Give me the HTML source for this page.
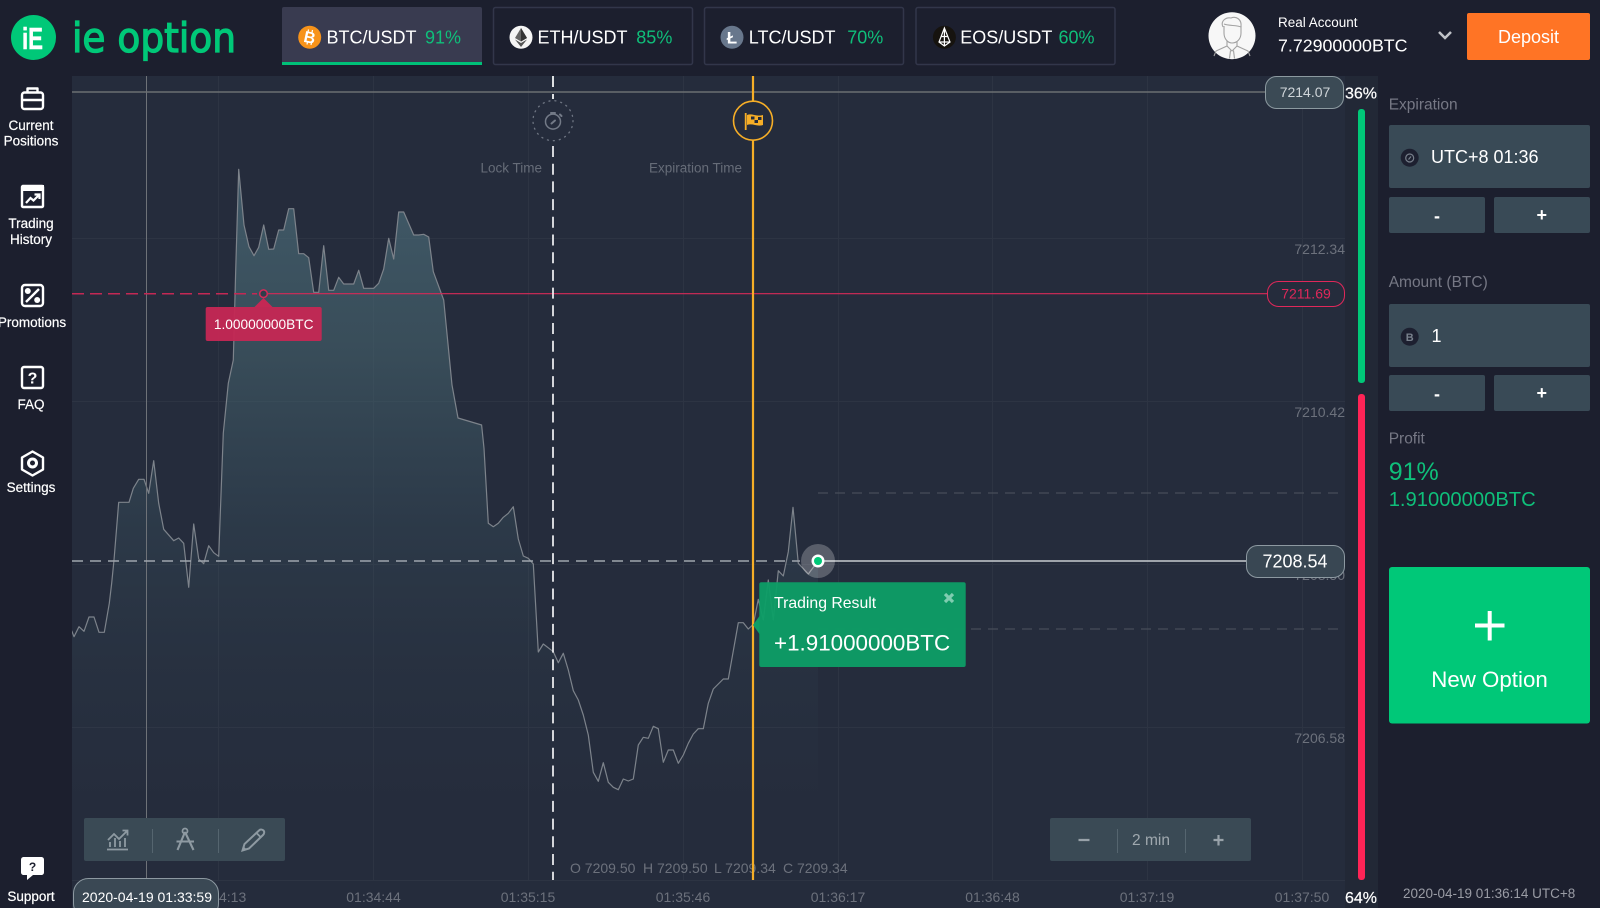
<!DOCTYPE html>
<html lang="en"><head><meta charset="utf-8"><title>ie option</title>
<style>
html,body{margin:0;padding:0;background:#1c1f2e;width:1600px;height:908px;overflow:hidden}
svg{display:block}
text{font-family:"Liberation Sans",sans-serif}
.w{fill:#fff}
.ax{fill:#6c717c;font-size:14px}
.g{fill:#0fbf7a;font-size:18px}
.lab{fill:#fff;font-size:13.5px;text-anchor:middle;stroke:#fff;stroke-width:.2}
.pl{fill:#767885;font-size:15.5px}
.tab{fill:#fff;font-size:18px}
</style></head><body>
<svg width="1600" height="908" viewBox="0 0 1600 908" xmlns="http://www.w3.org/2000/svg">
<defs>
<linearGradient id="af" gradientUnits="userSpaceOnUse" x1="0" y1="170" x2="0" y2="880">
<stop offset="0" stop-color="#4c6d7b" stop-opacity=".7"/>
<stop offset=".25" stop-color="#47656f" stop-opacity=".58"/>
<stop offset=".5" stop-color="#41606c" stop-opacity=".26"/>
<stop offset=".72" stop-color="#3a5560" stop-opacity=".1"/>
<stop offset=".9" stop-color="#3a5560" stop-opacity="0"/>
</linearGradient>
</defs>
<rect width="1600" height="908" fill="#1c1f2e"/>
<!-- chart bg -->
<rect x="72" y="76" width="1273" height="832" fill="#252c3c"/>
<rect x="1345" y="76" width="33" height="832" fill="#222836"/>
<!-- grid -->
<g stroke="#2d3443" stroke-width="1">
<path d="M218.5 76V880M373.5 76V880M528.5 76V880M683.5 76V880M838.5 76V880M992.5 76V880M1147.5 76V880M1302.5 76V880"/>
<path d="M72 238.5H1345M72 401.5H1345M72 564.5H1345M72 727.5H1345M72 880.5H1345"/>
</g>
<!-- area and line -->
<path fill="url(#af)" d="M71.7 880L71.7 630.7 74 636.7 79 626.7 84 631.3 89 617 94 617 99 632.3 104.3 632.3 109.3 603.3 111.7 583 114 560 118.7 502.3 129 502.3 133.3 488.3 138.7 479.3 144 479.3 148.7 493.3 153.7 460.7 158.7 503.3 163.7 529.3 173.7 540.7 178.7 538 183.7 543.3 188.7 587.3 193.7 524 198.7 559 203.7 563.7 208.7 545.7 213.7 552.7 218.7 556.3 223.3 433 228.3 383.3 233.3 360 235.7 270 238.7 169.3 244 225 249 246.7 254 255.7 258.7 247.3 263.7 225 268.7 249.3 273.7 249 278.7 230 283.7 230 288.7 208.7 293.7 208.7 298.7 253.7 303.7 253.7 308.7 257.7 313.7 292.3 318.7 292.3 323.7 245.7 328.7 290.3 333.7 290.3 338.7 277.3 343.7 284 353.7 284 358.7 270.3 363.7 288.3 373.7 288.3 378.7 283.3 383.7 269 388.7 238.3 393.7 259 398.7 212 403.7 212 413.7 235 418.7 235 423.7 234.3 428.7 237 433.3 271.7 443.7 300 452 385 458 418 481.6 425 484 448.3 488.3 523.3 493.3 526.7 498.3 523.3 503.3 517.3 508.3 513.3 513.3 506.7 518.3 539 523.3 556 528.3 558.3 533.3 564 538.3 652 543.3 644 553.3 651.7 558.3 662.7 563.3 653.3 568.3 670 573.3 690.7 578.3 700 583.3 715 588.3 735 593.3 772.3 598.3 781.3 603.3 762.7 608.3 782.3 613.3 787.3 618.3 789.7 623.3 779 628.3 781 633.3 779 638.3 745 643.3 737.3 648.3 738.3 653.3 726.3 658.3 728.7 663.3 762.3 668.3 750 673.3 750 678.3 763.3 683.3 755 688.3 743.3 693.3 734 698.3 728.7 703.3 728.7 708.3 703.3 713.3 689 723.3 679 728.3 679 738.3 622.7 743.3 622.7 748.3 629 753.3 624.3 758.3 599.3 763.3 620 768.3 580 773.3 620 778.3 570.7 783.3 576 788.3 551.7 793 507.3 798.3 563.3 808.3 574 818 561 818 880Z"/>
<polyline fill="none" stroke="#7d838b" stroke-width="1.2" stroke-linejoin="round" points="71.7,630.7 74,636.7 79,626.7 84,631.3 89,617 94,617 99,632.3 104.3,632.3 109.3,603.3 111.7,583 114,560 118.7,502.3 129,502.3 133.3,488.3 138.7,479.3 144,479.3 148.7,493.3 153.7,460.7 158.7,503.3 163.7,529.3 173.7,540.7 178.7,538 183.7,543.3 188.7,587.3 193.7,524 198.7,559 203.7,563.7 208.7,545.7 213.7,552.7 218.7,556.3 223.3,433 228.3,383.3 233.3,360 235.7,270 238.7,169.3 244,225 249,246.7 254,255.7 258.7,247.3 263.7,225 268.7,249.3 273.7,249 278.7,230 283.7,230 288.7,208.7 293.7,208.7 298.7,253.7 303.7,253.7 308.7,257.7 313.7,292.3 318.7,292.3 323.7,245.7 328.7,290.3 333.7,290.3 338.7,277.3 343.7,284 353.7,284 358.7,270.3 363.7,288.3 373.7,288.3 378.7,283.3 383.7,269 388.7,238.3 393.7,259 398.7,212 403.7,212 413.7,235 418.7,235 423.7,234.3 428.7,237 433.3,271.7 443.7,300 452,385 458,418 481.6,425 484,448.3 488.3,523.3 493.3,526.7 498.3,523.3 503.3,517.3 508.3,513.3 513.3,506.7 518.3,539 523.3,556 528.3,558.3 533.3,564 538.3,652 543.3,644 553.3,651.7 558.3,662.7 563.3,653.3 568.3,670 573.3,690.7 578.3,700 583.3,715 588.3,735 593.3,772.3 598.3,781.3 603.3,762.7 608.3,782.3 613.3,787.3 618.3,789.7 623.3,779 628.3,781 633.3,779 638.3,745 643.3,737.3 648.3,738.3 653.3,726.3 658.3,728.7 663.3,762.3 668.3,750 673.3,750 678.3,763.3 683.3,755 688.3,743.3 693.3,734 698.3,728.7 703.3,728.7 708.3,703.3 713.3,689 723.3,679 728.3,679 738.3,622.7 743.3,622.7 748.3,629 753.3,624.3 758.3,599.3 763.3,620 768.3,580 773.3,620 778.3,570.7 783.3,576 788.3,551.7 793,507.3 798.3,563.3 808.3,574 818,561"/>
<!-- axis labels -->
<g class="ax" text-anchor="end">
<text x="1345" y="254">7212.34</text><text x="1345" y="417">7210.42</text><text x="1345" y="580">7208.50</text><text x="1345" y="743">7206.58</text>
</g>
<g class="ax" text-anchor="middle">
<text x="219" y="902">01:34:13</text><text x="373.500" y="902">01:34:44</text><text x="528" y="902">01:35:15</text><text x="683" y="902">01:35:46</text><text x="838" y="902">01:36:17</text><text x="992.500" y="902">01:36:48</text><text x="1147" y="902">01:37:19</text><text x="1302" y="902">01:37:50</text>
</g>
<g class="ax"><text x="570" y="873">O 7209.50</text><text x="643" y="873">H 7209.50</text><text x="714" y="873">L 7209.34</text><text x="783" y="873">C 7209.34</text></g>
<!-- cross line -->
<line x1="146.5" y1="76" x2="146.5" y2="880" stroke="#6e7278" stroke-width="1"/>
<!-- top line -->
<line x1="72" y1="92" x2="1266" y2="92" stroke="#6b6e72" stroke-width="1.5"/>
<rect x="1265.5" y="76.5" width="78" height="32" rx="11" fill="#3b4a55" stroke="#8c9aa0"/>
<text x="1305" y="97" font-size="14" fill="#cfd5d9" text-anchor="middle">7214.07</text>
<!-- guide dashes -->
<g stroke="#474d59" stroke-width="1.3" stroke-dasharray="10 7"><line x1="818" y1="493" x2="1345" y2="493"/><line x1="818" y1="629" x2="1345" y2="629"/></g>
<!-- red line -->
<line x1="72" y1="293.7" x2="257" y2="293.7" stroke="#c42854" stroke-width="1.5" stroke-dasharray="12 6"/>
<line x1="268" y1="293.7" x2="1267" y2="293.7" stroke="#d62a58" stroke-width="1.2"/>
<circle cx="263.5" cy="293.7" r="3.8" fill="#2f3d4a" stroke="#d62a58" stroke-width="1.5"/>
<path d="M254.500 307L263.500 298L272.500 307Z" fill="#c42854"/>
<rect x="205.700" y="307" width="116" height="34" rx="2" fill="#c42854" fill-opacity=".96"/>
<text x="263.700" y="329" font-size="13.700" fill="#fff" text-anchor="middle">1.00000000BTC</text>
<rect x="1267.500" y="281.500" width="77" height="25" rx="11" fill="#252c3c" stroke="#e0285a"/>
<text x="1306" y="298.500" font-size="14" fill="#e0285a" text-anchor="middle">7211.69</text>
<!-- dashed price -->
<line x1="72" y1="561" x2="800" y2="561" stroke="#a0a6ad" stroke-width="1.5" stroke-dasharray="11 7"/>
<line x1="818" y1="561" x2="1246" y2="561" stroke="#c8ccd0" stroke-width="1.6"/>
<rect x="1246.500" y="545.500" width="98" height="32" rx="11" fill="#394753" stroke="#8d99a1"/>
<text x="1295" y="567.500" font-size="18" fill="#fff" text-anchor="middle">7208.54</text>
<!-- lock line -->
<line x1="553" y1="76" x2="553" y2="99" stroke="#fff" stroke-width="1.700" stroke-dasharray="11 7"/>
<line x1="553" y1="146" x2="553" y2="880" stroke="#f2f3f5" stroke-width="1.700" stroke-dasharray="11 6.700"/>
<circle cx="553" cy="120.700" r="20" fill="none" stroke="#6f7683" stroke-width="1.300" stroke-dasharray="1 5" stroke-linecap="round"/>
<circle cx="553" cy="121.600" r="7.500" fill="none" stroke="#737a87" stroke-width="1.500"/>
<path d="M551 113h4M560 114.500l1.500 1.500M551.500 123.500l3.500-3" stroke="#737a87" stroke-width="2" fill="none" stroke-linecap="round"/>
<text x="542" y="172.500" font-size="13.500" fill="#666c78" text-anchor="end">Lock Time</text>
<text x="742" y="172.500" font-size="13.500" fill="#666c78" text-anchor="end">Expiration Time</text>
<!-- expiration line -->
<line x1="753" y1="76" x2="753" y2="880" stroke="#f6ae27" stroke-width="2.200"/>
<circle cx="753" cy="120.700" r="19.500" fill="#252c3c" stroke="#f6ae27" stroke-width="1.600"/>
<path d="M745.700 113V130" stroke="#f6ae27" stroke-width="1.800"/>
<path d="M747 115c5-2 9 2 16 0v10c-6 2-10-2-16 0Z" fill="#f6ae27"/>
<path d="M751 116.500h3.500v3H751ZM758 117h3.500v3H758ZM754.500 120h3.500v3h-3.500Z" fill="#252c3c"/>
<!-- current dot -->
<circle cx="818" cy="561" r="17" fill="#fff" fill-opacity=".24"/>
<circle cx="818" cy="561" r="6.500" fill="#fff"/>
<circle cx="818" cy="561" r="4" fill="#00c878"/>
<!-- toolbars -->
<rect x="84" y="818" width="201" height="43" rx="2" fill="#3a4a55"/>
<path d="M152.500 829V853M218.500 829V853" stroke="#55656f"/>
<g fill="none" stroke="#8e9aa2" stroke-width="1.800">
<path d="M107 849.500H128M110 847V842M115 847V838M120 847V841M125 847V838"/>
<path d="M108 840l6-6 5 5 8-8M122.500 830.500H127.500V835.500"/>
<path d="M185 832L177.500 850M185 832L193.500 850M176.500 841.500H194" stroke-width="2.100"/>
<circle cx="185" cy="831" r="2.500"/>
<path d="M242.500 850.500L244.500 844L259 830.500C260.500 829 262.500 829.500 263.500 830.500C264.500 831.500 264.500 833.500 263 835L249 848.500Z" stroke-width="2"/>
<path d="M256.500 833L261 837.500"/>
</g>
<path d="M242.500 850.500L243.700 846.500L246.500 849.300Z" fill="#8e9aa2"/>
<rect x="1050" y="818" width="201" height="43" rx="2" fill="#3a4a55"/>
<path d="M1117.500 829V853M1185.500 829V853" stroke="#55656f"/>
<path d="M1078.500 840H1089.500M1218.500 835V845.500M1213.500 840H1223.500" stroke="#98a2a9" stroke-width="2.200"/>
<text x="1151" y="845" font-size="15.500" fill="#a0a9af" text-anchor="middle">2 min</text>
<!-- date pill -->
<rect x="73.500" y="878.500" width="145" height="40" rx="15" fill="#3a4854" stroke="#8d99a1"/>
<text x="147" y="902" font-size="14" fill="#fff" text-anchor="middle">2020-04-19 01:33:59</text>
<!-- trading result -->
<path d="M759.500 616L753 625L759.500 634Z" fill="#0d9e66"/>
<rect x="759.300" y="582.300" width="206.400" height="84.700" rx="2" fill="#0d9e66" fill-opacity=".95"/>
<text x="774" y="608" font-size="15.800" fill="#fff">Trading Result</text>
<text x="774" y="650.500" font-size="22.400" fill="#fff">+1.91000000BTC</text>
<path d="M945 594L953 602M953 594L945 602" stroke="#7fcdb0" stroke-width="3.200"/>
<!-- bars -->
<rect x="1358" y="109" width="7" height="274" rx="3" fill="#00c878"/>
<rect x="1358" y="394" width="7" height="486" rx="3" fill="#ff2456"/>
<text x="1361" y="98.500" font-size="16" fill="#fff" text-anchor="middle" stroke="#fff" stroke-width=".2">36%</text>
<text x="1361" y="903" font-size="16" fill="#fff" text-anchor="middle" stroke="#fff" stroke-width=".2">64%</text>
<!-- right panel -->
<text class="pl" x="1388.700" y="109.500">Expiration</text>
<rect x="1389" y="125" width="201" height="63" rx="2" fill="#394a56"/>
<circle cx="1409.700" cy="157.700" r="9" fill="#1d2030"/>
<circle cx="1409.700" cy="158" r="4" fill="none" stroke="#78808c" stroke-width="1.200"/>
<path d="M1408.500 159.500l2.500-3" stroke="#78808c" stroke-width="1.200"/>
<text x="1431" y="163" font-size="18" fill="#fff">UTC+8 01:36</text>
<rect x="1389" y="197" width="96" height="36" rx="2" fill="#394a56"/>
<rect x="1494" y="197" width="96" height="36" rx="2" fill="#394a56"/>
<text x="1437" y="222" font-size="18" font-weight="bold" fill="#fff" text-anchor="middle">-</text>
<text x="1541.700" y="221" font-size="18" font-weight="bold" fill="#fff" text-anchor="middle">+</text>
<text class="pl" x="1388.700" y="287">Amount (BTC)</text>
<rect x="1389" y="304" width="201" height="63" rx="2" fill="#394a56"/>
<circle cx="1409.700" cy="336.700" r="9" fill="#1d2030"/>
<text x="1409.700" y="341" font-size="11" font-weight="bold" fill="#78808c" text-anchor="middle">B</text>
<text x="1431.500" y="342" font-size="18" fill="#fff">1</text>
<rect x="1389" y="375" width="96" height="36" rx="2" fill="#394a56"/>
<rect x="1494" y="375" width="96" height="36" rx="2" fill="#394a56"/>
<text x="1437" y="400" font-size="18" font-weight="bold" fill="#fff" text-anchor="middle">-</text>
<text x="1541.700" y="399" font-size="18" font-weight="bold" fill="#fff" text-anchor="middle">+</text>
<text class="pl" x="1388.700" y="443.500">Profit</text>
<text x="1388.700" y="480" font-size="25" fill="#0fbf7a">91%</text>
<text x="1388.700" y="506" font-size="20.200" fill="#0fbf7a">1.91000000BTC</text>
<rect x="1389" y="567" width="201" height="156.500" rx="3" fill="#00c878"/>
<path d="M1475 625.500H1504.500M1489.700 611V640.500" stroke="#fff" stroke-width="4"/>
<text x="1489.500" y="687" font-size="22.300" fill="#fff" text-anchor="middle">New Option</text>
<text x="1403" y="898" font-size="13.500" fill="#9a9ca5">2020-04-19 01:36:14 UTC+8</text>
<!-- sidebar -->
<rect x="0" y="76" width="72" height="832" fill="#1c1f2e"/>
<g fill="none" stroke="#fff" stroke-width="2.400" stroke-linejoin="round">
<rect x="22" y="92.500" width="21" height="16.500" rx="2.500"/>
<path d="M27.500 92V88.500H37.500V92M22 100H43"/>
<rect x="22" y="186" width="21" height="21" rx="1"/>
<rect x="22" y="285" width="21" height="21" rx="3"/>
<path d="M26 302L39 289"/>
<rect x="22" y="367" width="21" height="21" rx="2"/>
<path d="M32.500 451.500L43 457.500V469.500L32.500 475.500L22 469.500V457.500Z"/>
</g>
<path d="M22 185h22v6H22Z" fill="#fff"/>
<path d="M26 203l4.500-5 3 2.500 5.500-5.500M34.500 194.500H39.500V199" fill="none" stroke="#fff" stroke-width="2.200"/>
<circle cx="27.800" cy="291" r="3" fill="#fff"/><circle cx="37.200" cy="300" r="3" fill="#fff"/>
<text x="32.500" y="383.500" font-size="16" font-weight="bold" fill="#fff" text-anchor="middle">?</text>
<circle cx="32.500" cy="463" r="4" fill="none" stroke="#fff" stroke-width="3"/>
<path d="M24 857H41C43 857 44 858 44 860V872C44 874 43 875 41 875H33L27 880V875H24C22 875 21 874 21 872V860C21 858 22 857 24 857Z" fill="#fff"/>
<text x="32.500" y="871" font-size="12" font-weight="bold" fill="#1c1f2e" text-anchor="middle">?</text>
<text class="lab" x="31" y="130">Current</text><text class="lab" x="31" y="145.500">Positions</text>
<text class="lab" x="31" y="228">Trading</text><text class="lab" x="31" y="244">History</text>
<text class="lab" x="32" y="327">Promotions</text>
<text class="lab" x="31" y="409">FAQ</text>
<text class="lab" x="31" y="492">Settings</text>
<text class="lab" x="31" y="901">Support</text>
<!-- header -->
<rect x="0" y="0" width="1600" height="76" fill="#1c1f2e"/>
<circle cx="33.500" cy="37.500" r="22.500" fill="#00c878"/>
<text x="22" y="49" font-size="31" font-weight="bold" fill="#fff" stroke="#fff" stroke-width=".5" textLength="21" lengthAdjust="spacingAndGlyphs">iE</text>
<text x="72" y="52" font-size="41" fill="#00c878" stroke="#00c878" stroke-width="1.300" style="font-family:'DejaVu Sans',sans-serif" textLength="164" lengthAdjust="spacingAndGlyphs">ie option</text>
<!-- tabs -->
<rect x="282" y="7" width="200" height="58" rx="2" fill="#393b50"/>
<rect x="282" y="62" width="200" height="3" fill="#00c078"/>
<g fill="none" stroke="#32364a" stroke-width="1.500">
<rect x="493.500" y="7.500" width="199" height="57" rx="2"/>
<rect x="704.500" y="7.500" width="199" height="57" rx="2"/>
<rect x="916" y="7.500" width="199" height="57" rx="2"/>
</g>
<circle cx="309.700" cy="37.300" r="11.500" fill="#f7931a"/>
<text x="309.700" y="43" font-size="16" font-weight="bold" fill="#fff" text-anchor="middle" transform="rotate(12 309.700 37.300)">B</text>
<path d="M308.500 29.500l-.5 2.500M312.500 30l-.5 2.500M307.500 42l-.5 2.500M311.500 42.500l-.5 2.500" stroke="#fff" stroke-width="1.200"/>
<text class="tab" x="326.500" y="43.500">BTC/USDT</text><text class="g" x="425" y="43.500">91%</text>
<circle cx="521" cy="37.300" r="11.500" fill="#f5f5f5"/>
<path d="M521 28L515 38L521 41.500L527 38Z" fill="#666"/><path d="M521 28V41.500L527 38Z" fill="#333"/><path d="M515 39.500L521 47L527 39.500L521 43Z" fill="#555"/>
<text class="tab" x="537.500" y="43.500">ETH/USDT</text><text class="g" x="636.300" y="43.500">85%</text>
<circle cx="732" cy="37.300" r="11.500" fill="#68778c"/>
<text x="732" y="43.500" font-size="17" font-weight="bold" fill="#fff" text-anchor="middle">Ł</text>
<text class="tab" x="748.800" y="43.500">LTC/USDT</text><text class="g" x="847.200" y="43.500">70%</text>
<circle cx="944.400" cy="37.300" r="11.500" fill="#16130f"/>
<path d="M944.400 28L939 42L944.400 46L950 42ZM944.400 28V46M939 42H950M941 36.500L947.500 36.500" fill="none" stroke="#fff" stroke-width="1.200"/>
<text class="tab" x="960.300" y="43.500">EOS/USDT</text><text class="g" x="1058.500" y="43.500">60%</text>
<!-- account -->
<circle cx="1232" cy="35.700" r="23.500" fill="#f7f7f7"/>
<g fill="none" stroke="#a2a2a2" stroke-width="1.100">
<path d="M1223 27C1220 21 1226 17 1231 18C1236 16 1242 19 1241 27C1237 25 1229 26 1224 24"/>
<path d="M1224 26V33C1224 39 1228 43 1232 43C1237 43 1241 39 1241 33V26"/>
<path d="M1227 41V46L1216 51L1214 56M1237 41V46L1248 51L1250 56M1227 46L1232 51L1237 46M1230.500 50.500L1229.500 58.500M1233.500 50.500L1234.500 58.500"/>
</g>
<text x="1278" y="27" font-size="13.500" fill="#fff">Real Account</text>
<text x="1278" y="51.500" font-size="17.800" fill="#fff">7.72900000BTC</text>
<path d="M1439 32L1445 38L1451 32" fill="none" stroke="#c0c3c8" stroke-width="2.500"/>
<rect x="1467" y="13" width="123" height="47" rx="2" fill="#ff7425"/>
<text x="1528.500" y="43" font-size="18" fill="#fff" text-anchor="middle">Deposit</text>
</svg>
</body></html>
